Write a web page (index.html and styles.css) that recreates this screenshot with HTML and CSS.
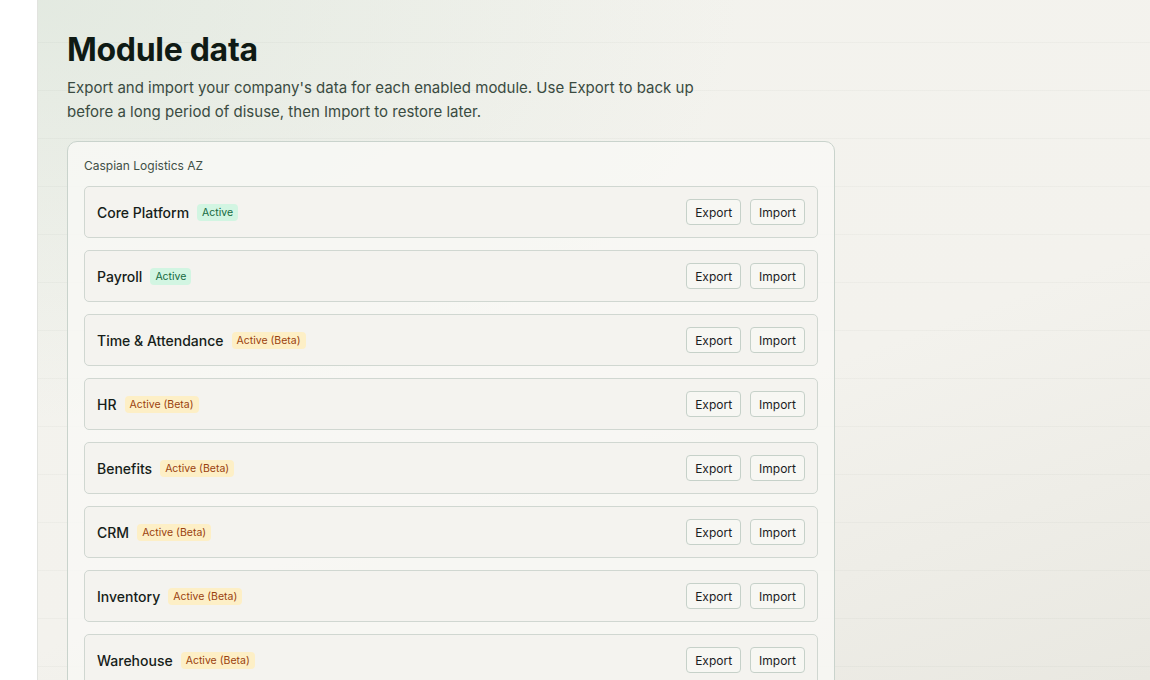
FILE: index.html
```html
<!DOCTYPE html>
<html lang="en">
<head>
  <meta charset="UTF-8">
  <meta name="viewport" content="width=device-width, initial-scale=1.0">
  <title>Module data</title>
  <link rel="stylesheet" href="styles.css">
</head>
<body>
  <div class="layout">
    <aside class="sidebar"></aside>
    <main class="content">
      <h1 class="page-title">Module data</h1>
      <p class="page-desc">Export and import your company's data for each enabled module. Use Export to back up before a long period of disuse, then Import to restore later.</p>

      <section class="company-card">
        <div class="company-name">Caspian Logistics AZ</div>
        <div class="module-list">
          <div class="module-row">
            <div class="module-info"><span class="module-name">Core Platform</span><span class="badge badge-active">Active</span></div>
            <div class="module-actions"><button class="btn">Export</button><button class="btn">Import</button></div>
          </div>
          <div class="module-row">
            <div class="module-info"><span class="module-name">Payroll</span><span class="badge badge-active">Active</span></div>
            <div class="module-actions"><button class="btn">Export</button><button class="btn">Import</button></div>
          </div>
          <div class="module-row">
            <div class="module-info"><span class="module-name">Time &amp; Attendance</span><span class="badge badge-beta">Active (Beta)</span></div>
            <div class="module-actions"><button class="btn">Export</button><button class="btn">Import</button></div>
          </div>
          <div class="module-row">
            <div class="module-info"><span class="module-name">HR</span><span class="badge badge-beta">Active (Beta)</span></div>
            <div class="module-actions"><button class="btn">Export</button><button class="btn">Import</button></div>
          </div>
          <div class="module-row">
            <div class="module-info"><span class="module-name">Benefits</span><span class="badge badge-beta">Active (Beta)</span></div>
            <div class="module-actions"><button class="btn">Export</button><button class="btn">Import</button></div>
          </div>
          <div class="module-row">
            <div class="module-info"><span class="module-name">CRM</span><span class="badge badge-beta">Active (Beta)</span></div>
            <div class="module-actions"><button class="btn">Export</button><button class="btn">Import</button></div>
          </div>
          <div class="module-row">
            <div class="module-info"><span class="module-name">Inventory</span><span class="badge badge-beta">Active (Beta)</span></div>
            <div class="module-actions"><button class="btn">Export</button><button class="btn">Import</button></div>
          </div>
          <div class="module-row">
            <div class="module-info"><span class="module-name">Warehouse</span><span class="badge badge-beta">Active (Beta)</span></div>
            <div class="module-actions"><button class="btn">Export</button><button class="btn">Import</button></div>
          </div>
        </div>
      </section>
    </main>
  </div>
</body>
</html>
```

FILE: styles.css
```css
html, body {
  margin: 0;
  padding: 0;
  height: 100%;
}
body {
  font-family: Inter, "Noto Sans", sans-serif;
  color: #16201b;
  background-color: #ffffff;
  overflow: hidden;
}
.layout {
  display: flex;
  height: 100%;
}
.sidebar {
  width: 37px;
  flex-shrink: 0;
  background-color: #ffffff;
  border-right: 1px solid #e2e3df;
}
.content {
  flex: 1;
  padding: 30px 29px;
  background-color: #f2f1ec;
  background-image:
    repeating-linear-gradient(to bottom, transparent 0, transparent 42px, rgba(60, 70, 60, 0.035) 42px, rgba(60, 70, 60, 0.035) 43px, transparent 43px, transparent 48px),
    radial-gradient(ellipse 700px 420px at 0 0, rgba(214, 226, 214, 0.55), rgba(214, 226, 214, 0)),
    linear-gradient(160deg, #f3f3ee 0%, #f3f2ed 60%, #e9e8e1 100%);
}
.page-title {
  margin: 0;
  font-size: 32px;
  line-height: 40px;
  font-weight: 650;
  letter-spacing: -0.3px;
  color: #0f1a14;
}
.page-desc {
  margin: 6px 0 0;
  max-width: 640px;
  font-size: 15px;
  line-height: 24px;
  color: #3a4b41;
}
.company-card {
  margin-top: 17px;
  width: 734px;
  padding: 16px 16px 16px;
  background-color: rgba(248, 248, 245, 0.85);
  border: 1px solid #c9d3cc;
  border-radius: 10px;
}
.company-name {
  font-size: 12px;
  line-height: 16px;
  color: #3f4f46;
  margin-bottom: 12px;
}
.module-list {
  display: flex;
  flex-direction: column;
  gap: 12px;
}
.module-row {
  display: flex;
  align-items: center;
  justify-content: space-between;
  padding: 12px 12px;
  border: 1px solid #d0d7d1;
  border-radius: 5px;
  background-color: #f4f3ef;
}
.module-info {
  display: flex;
  align-items: center;
  gap: 8px;
}
.module-name {
  font-size: 14px;
  font-weight: 450;
  color: #161d19;
}
.badge {
  font-size: 10.5px;
  line-height: 17px;
  padding: 0 5px;
  border-radius: 4px;
}
.badge-active {
  background-color: #d2f5e2;
  color: #14693f;
}
.badge-beta {
  background-color: #fdefc6;
  color: #9a3f0e;
}
.module-actions {
  display: flex;
  gap: 9px;
}
.btn {
  height: 26px;
  padding: 0 8px;
  font-family: Inter, "Noto Sans", sans-serif;
  font-size: 12px;
  color: #1b211e;
  background-color: #f7f7f3;
  border: 1px solid #c6d1c9;
  border-radius: 4px;
  cursor: pointer;
}
```
